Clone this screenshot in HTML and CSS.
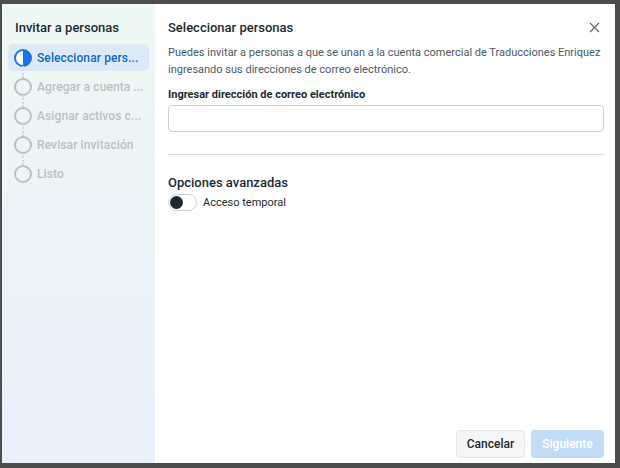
FILE: index.html
```html
<!DOCTYPE html>
<html lang="es">
<head>
    <meta charset="UTF-8" />
    <title>Invitar a personas</title>
    <link rel="stylesheet" href="styles.css">
</head>
<body>

    <div class="modal">
        <div class="pasos">
            <h3>Invitar a personas</h3>
            <ul class="lista-pasos">
                <li class="paso activo" title="Seleccionar personas">
                    <span class="circulo medio"></span>
                    <span class="paso-texto">Seleccionar pers...</span>
                </li>
                <li class="paso" title="Agregar a cuenta comercial">
                    <span class="circulo"></span>
                    <span class="paso-texto">Agregar a cuenta ...</span>
                </li>
                <li class="paso" title="Asignar activos comerciales">
                    <span class="circulo"></span>
                    <span class="paso-texto">Asignar activos c...</span>
                </li>
                <li class="paso">
                    <span class="circulo"></span>
                    <span class="paso-texto">Revisar invitación</span>
                </li>
                <li class="paso ultimo">
                    <span class="circulo"></span>
                    <span class="paso-texto">Listo</span>
                </li>
            </ul>
        </div>

        <div class="contenido">
            <div class="cabecera">
                <h3>Seleccionar personas</h3>
                <span class="cerrar">
                    <svg width="11" height="11" viewBox="0 0 11 11">
                        <path d="M1 1 L10 10 M10 1 L1 10" stroke="#606770" stroke-width="1.2" fill="none" />
                    </svg>
                </span>
            </div>
            <p class="descripcion">Puedes invitar a personas a que se unan a la cuenta comercial de Traducciones Enriquez ingresando sus direcciones de correo electrónico.</p>
            <label class="etiqueta" for="correo">Ingresar dirección de correo electrónico</label>
            <input type="text" id="correo" class="campo" />
            <hr class="separador" />
            <h4>Opciones avanzadas</h4>
            <div class="opcion">
                <span class="interruptor"><span class="perilla"></span></span>
                <span>Acceso temporal</span>
            </div>
            <div class="pie">
                <button class="cancelar">Cancelar</button>
                <button class="siguiente" disabled>Siguiente</button>
            </div>
        </div>
    </div>

</body>
</html>
```

FILE: styles.css
```css
body {
    margin: 0;
    background: #4d4d4d;
    font-family: Roboto, "Liberation Sans", Arial, sans-serif;
    color: #1c2b33;
}

.modal {
    display: flex;
    width: 613px;
    height: 459px;
    margin: 4px 0 0 2px;
    background: #ffffff;
}

/* columna de pasos */
.pasos {
    width: 153px;
    background: linear-gradient(180deg, #eef8f4 0%, #ebf4f8 45%, #e8f1fc 100%);
    padding: 0 6px 0 6px;
    box-sizing: border-box;
}

.pasos h3 {
    margin: 15px 0 8px 7px;
    font-size: 13px;
    font-weight: 500;
    line-height: 17px;
}

.lista-pasos {
    list-style: none;
    margin: 0;
    padding: 0;
}

.paso {
    position: relative;
    display: flex;
    align-items: center;
    gap: 5px;
    height: 27px;
    margin-bottom: 2px;
    padding: 0 6px;
    border-radius: 5px;
    font-size: 12px;
    font-weight: 500;
    letter-spacing: 0.1px;
    color: #bcc0c4;
}

    .paso::after {
        content: "";
        position: absolute;
        left: 14px;
        top: 22px;
        height: 12px;
        border-left: 2px dotted #d5d9dd;
    }

    .paso.ultimo::after {
        display: none;
    }

.paso-texto {
    white-space: nowrap;
}

.paso.activo {
    background: #dde9f6;
    color: #0a6dc2;
}

.circulo {
    flex: none;
    width: 14px;
    height: 14px;
    border: 2px solid #bcc0c4;
    border-radius: 50%;
}

    .circulo.medio {
        border-color: #1b74e4;
        background: linear-gradient(90deg, #ffffff 50%, #1b74e4 50%);
    }

/* contenido principal */
.contenido {
    flex: 1;
    display: flex;
    flex-direction: column;
    padding: 0 11px 5px 13px;
}

.cabecera {
    display: flex;
    justify-content: space-between;
    align-items: center;
    margin-top: 15px;
    height: 17px;
}

    .cabecera h3 {
        margin: 0;
        font-size: 13px;
        font-weight: 500;
    }

.cerrar {
    display: flex;
    margin-right: 4px;
}

.descripcion {
    margin: 8px 0 0 0;
    font-size: 11px;
    line-height: 17px;
    color: #4b5a66;
}

.etiqueta {
    margin-top: 9px;
    font-size: 11px;
    font-weight: 700;
    line-height: 15px;
}

.campo {
    margin-top: 3px;
    height: 27px;
    border: 1px solid #ccd0d5;
    border-radius: 4px;
    box-sizing: border-box;
    outline: none;
}

.separador {
    border: none;
    border-top: 1px solid #dadde1;
    margin: 22px 0 0 0;
}

h4 {
    margin: 19px 0 0 0;
    font-size: 13px;
    font-weight: 500;
    line-height: 17px;
}

.opcion {
    display: flex;
    align-items: center;
    gap: 6px;
    margin-top: 3px;
    font-size: 11px;
    color: #1c2b33;
}

.interruptor {
    display: flex;
    align-items: center;
    width: 29px;
    height: 17px;
    border: 1px solid #ccd0d5;
    border-radius: 9px;
    box-sizing: border-box;
    padding: 1px;
}

.perilla {
    width: 13px;
    height: 13px;
    border-radius: 50%;
    background: #1c2b33;
}

.pie {
    margin-top: auto;
    display: flex;
    justify-content: flex-end;
    gap: 6px;
}

button {
    height: 28px;
    padding: 0 6px;
    border-radius: 4px;
    font-family: inherit;
    font-size: 12px;
    font-weight: 500;
    cursor: pointer;
}

.cancelar {
    width: 69px;
    background: #f5f6f7;
    border: 1px solid #e4e6eb;
    color: #1c2b33;
}

.siguiente {
    width: 73px;
    background: #c2dcf5;
    border: none;
    color: #ffffff;
}

    .siguiente:disabled {
        cursor: not-allowed;
    }
```
